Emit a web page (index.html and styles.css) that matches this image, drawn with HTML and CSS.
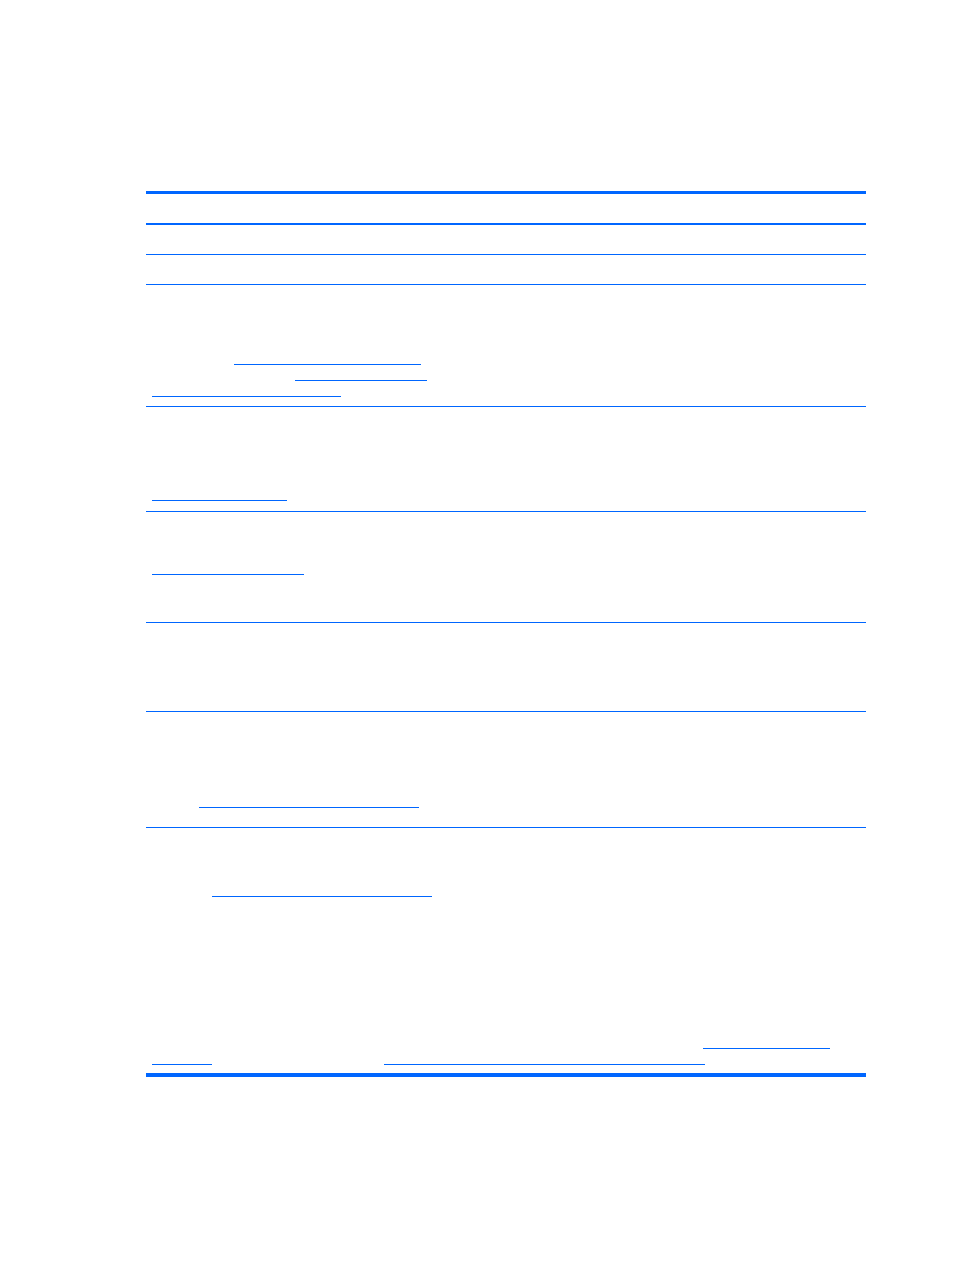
FILE: index.html
```html
<!DOCTYPE html>
<html>
<head>
<meta charset="utf-8">
<link rel="stylesheet" href="styles.css">
</head>
<body>
<div class="table">
  <div class="head"></div>
  <div class="row r1"></div>
  <div class="row r2"></div>
  <div class="row r3">
    <a class="ul u3a"></a>
    <a class="ul u3b"></a>
    <a class="ul u3c"></a>
  </div>
  <div class="row r4">
    <a class="ul u4"></a>
  </div>
  <div class="row r5">
    <a class="ul u5"></a>
  </div>
  <div class="row r6"></div>
  <div class="row r7">
    <a class="ul u7"></a>
  </div>
  <div class="row r8">
    <a class="ul u8a"></a>
    <a class="ul u8b"></a>
    <div class="pair">
      <a class="ul u8c"></a>
      <a class="ul u8d"></a>
    </div>
  </div>
</div>
</body>
</html>
```
FILE: styles.css
```css
html, body {
  margin: 0;
  padding: 0;
  background: #ffffff;
  font-family: "Liberation Sans", Arial, sans-serif;
}
.table {
  margin: 191px 0 0 146px;
  width: 720px;
  border-top: 3px solid #0066ff;
}
.head {
  height: 29px;
  border-bottom: 2px solid #0066ff;
}
.row {
  display: flow-root;
  box-sizing: content-box;
  border-bottom: 1px solid #0066ff;
}
.ul {
  display: block;
  height: 1px;
  background: #0066ff;
}
.pair {
  display: flex;
  margin-top: 15px;
}
.r1, .r2 { height: 29px; }
.r3 { height: 121px; }
.r4 { height: 104px; }
.r5 { height: 110px; }
.r6 { height: 88px; }
.r7 { height: 115px; }
.r8 { height: 245px; border-bottom: 4px solid #0066ff; }

.u3a { margin: 79px 0 0 88px; width: 187px; }
.u3b { margin: 15px 0 0 149px; width: 132px; }
.u3c { margin: 15px 0 0 6px; width: 189px; }
.u4 { margin: 93px 0 0 6px; width: 135px; }
.u5 { margin: 62px 0 0 6px; width: 152px; }
.u7 { margin: 95px 0 0 53px; width: 220px; }
.u8a { margin: 68px 0 0 66px; width: 220px; }
.u8b { margin: 151px 0 0 557px; width: 127px; }
.u8c { margin-left: 6px; width: 60px; }
.u8d { margin-left: 172px; width: 321px; }
```
